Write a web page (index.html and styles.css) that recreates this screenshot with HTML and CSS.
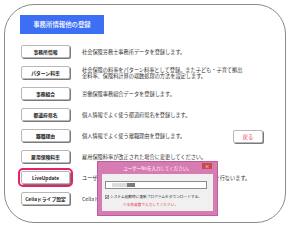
FILE: index.html
```html
<!DOCTYPE html>
<html lang="ja">
<head>
  <meta charset="UTF-8" />
  <title>事務所情報他の登録</title>
  <link rel="stylesheet" href="styles.css">
</head>
<body>
  <div class="frame">
    <div class="title">事務所情報他の登録</div>

    <div class="menu">
      <div class="row">
        <span class="btn">事務所情報</span>
        <p class="desc">社会保険労務士事務所データを登録します。</p>
      </div>
      <div class="row">
        <span class="btn">パターン料率</span>
        <p class="desc">社会保険の料率をパターン料率として登録。また子ども・子育て拠出<br>金料率、保険料計算の端数処理の方法を設定します。</p>
      </div>
      <div class="row">
        <span class="btn">事務組合</span>
        <p class="desc">労働保険事務組合データを登録します。</p>
      </div>
      <div class="row">
        <span class="btn">都道府県名</span>
        <p class="desc">個人情報でよく使う都道府県名を登録します。</p>
      </div>
      <div class="row">
        <span class="btn">離職理由</span>
        <p class="desc">個人情報でよく使う離職理由を登録します。</p>
        <span class="btn back">戻る</span>
      </div>
      <div class="row">
        <span class="btn">雇用保険料率</span>
        <p class="desc">雇用保険料率が改正された場合に変更してください。</p>
      </div>
      <div class="row">
        <span class="btn active">LiveUpdate</span>
        <p class="desc">ユーザーNoを入力してLiveUpdateによるプログラム更新を行ないます。</p>
      </div>
      <div class="row">
        <span class="btn">Cellaドライブ設定</span>
        <p class="desc">Cellaドライブの設定を行ないます。</p>
      </div>
    </div>
  </div>

  <!-- LiveUpdate dialog -->
  <div class="dialog">
    <div class="dialog-title">
      ユーザーNoを入力してください。
      <span class="close">&times;</span>
    </div>
    <div class="dialog-body">
      <div class="user-input">
        <span class="mask-light"></span><span class="mask-dark"></span>
      </div>
      <div class="check">
        <svg class="box" width="4" height="4" viewBox="0 0 8 8">
          <rect x="0.5" y="0.5" width="7" height="7" fill="#fff" stroke="#555"/>
          <path d="M1.8 4.2 L3.4 5.8 L6.4 2" fill="none" stroke="#222" stroke-width="1.3"/>
        </svg>
        <span>システム起動時に更新プログラムをダウンロードする。</span>
      </div>
      <p class="note">※半角英数で入力してください。</p>
    </div>
  </div>
</body>
</html>
```

FILE: styles.css
```css
body {
  margin: 0;
  width: 300px;
  height: 243px;
  position: relative;
  background: #fff;
  font-family: "Noto Sans CJK JP", "Noto Sans", sans-serif;
  color: #333;
  overflow: hidden;
}

.frame {
  box-sizing: border-box;
  margin: 4px 0 0 4px;
  width: 282px;
  height: 219px;
  padding: 10px 0 0 15px;
  border: 1px solid #8a8a8a;
  border-radius: 30px;
}

.title {
  width: 84px;
  height: 19px;
  background: #3c6ff3;
  color: #fff;
  font-size: 6.4px;
  font-weight: 500;
  display: flex;
  align-items: center;
  justify-content: center;
}

.menu {
  margin: 11px 0 0 1px;
  display: flex;
  flex-direction: column;
  gap: 8px;
}

.row {
  display: flex;
  align-items: center;
  height: 13px;
}

.btn {
  box-sizing: border-box;
  flex: none;
  width: 49px;
  height: 13px;
  background: #fff;
  border: 1px solid #b8b8b8;
  border-radius: 2px;
  box-shadow: 1px 1px 0 #7a7a7a;
  font-size: 4.8px;
  font-weight: bold;
  color: #222;
  display: flex;
  align-items: center;
  justify-content: center;
  white-space: nowrap;
}

.btn.active {
  outline: 2px solid #e6206b;
  outline-offset: 1px;
}

.btn.back {
  width: 30px;
  margin: 2px 22px 0 auto;
  color: #e8344a;
  font-weight: normal;
  font-size: 5.2px;
}

.desc {
  margin: 0 0 0 12px;
  font-size: 5.2px;
  line-height: 6px;
  white-space: nowrap;
}

.dialog {
  position: absolute;
  left: 97px;
  top: 161px;
  box-sizing: border-box;
  width: 121px;
  height: 55px;
  padding: 0 4px 4px;
  background: #d77cb3;
  border: 1px solid #b9609a;
  display: flex;
  flex-direction: column;
}

.dialog-title {
  position: relative;
  height: 12px;
  flex: none;
  display: flex;
  align-items: center;
  justify-content: center;
  font-size: 4.5px;
  color: #fff;
}

.close {
  position: absolute;
  right: 1px;
  top: 1px;
  width: 10px;
  height: 6px;
  background: #c94850;
  color: #fff;
  font-size: 5px;
  line-height: 6px;
  text-align: center;
}

.dialog-body {
  flex: 1;
  background: #f0f0f0;
  padding: 7px 6px 0 3px;
}

.user-input {
  box-sizing: border-box;
  height: 8px;
  background: #fff;
  border: 1px solid #8c8c8c;
  display: flex;
  padding: 1px 0 1px 6px;
}

.mask-light {
  width: 15px;
  background: #dcdcdc;
}

.mask-dark {
  width: 8px;
  background: #7b7b7b;
}

.check {
  display: flex;
  align-items: center;
  gap: 1px;
  height: 5px;
  margin-top: 5px;
  font-size: 3.7px;
  line-height: 5px;
  color: #333;
}

.box {
  flex: none;
}

.note {
  margin: 3px 0 0 18px;
  font-size: 3.7px;
  line-height: 5px;
  color: #e8344a;
}
```
